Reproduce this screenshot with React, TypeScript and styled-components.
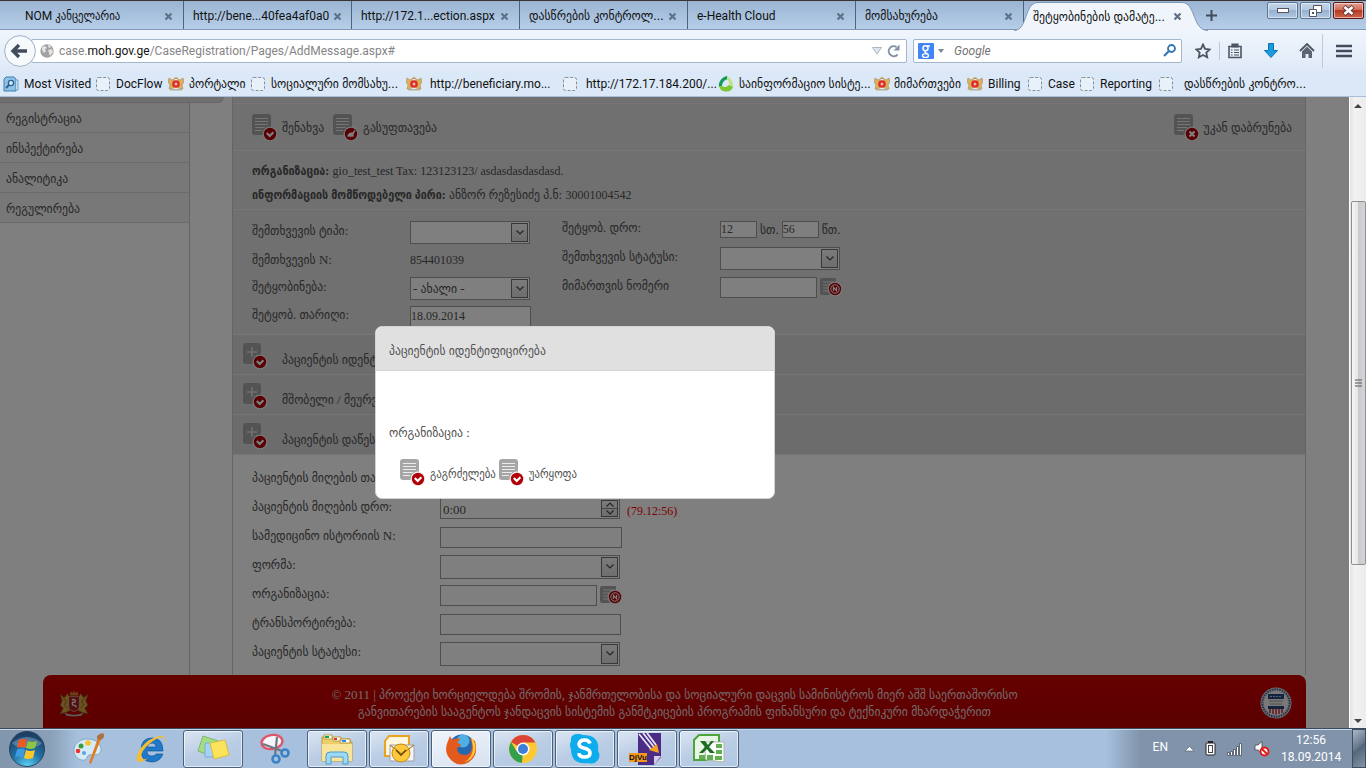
import React from "react";
import styled, { createGlobalStyle } from "styled-components";

const UI = 'Roboto, "DejaVu Sans Condensed", "DejaVu Sans", sans-serif';
const PAGE = '"Liberation Serif", "DejaVu Sans Condensed", "DejaVu Sans", serif';

const Global = createGlobalStyle`
  * { box-sizing: border-box; }
  body { margin: 0; background: #fff; }
  button, input, select { font: inherit; color: inherit; }
  button { border: 0; background: none; padding: 0; cursor: pointer; }
  svg { display: block; flex: none; }
`;

const Screen = styled.div`
  display: flex;
  flex-direction: column;
  height: 100vh;
  overflow: hidden;
  font: 12px/16px ${UI};
  color: #111;
`;

/* ---------- browser chrome ---------- */
const TabStrip = styled.div`
  display: flex;
  flex: none;
  height: 30px;
  padding-left: 16px;
  border-top: 1px solid #3a3336;
  border-bottom: 1px solid #7f9ab8;
  background: linear-gradient(#9ab4d2, #b6cee8);
`;
const Tab = styled.div`
  display: flex;
  align-items: center;
  flex: 0 1 168px;
  min-width: 0;
  padding: 0 10px 0 9px;
  border-right: 1px solid #4f6379;
`;
const ActiveTab = styled(Tab)`
  position: relative;
  flex-basis: 174px;
  height: 29px;
  padding: 0 16px 0 9px;
  border: 0;
`;
const TabShape = styled.svg`
  position: absolute;
  left: -10px;
  top: 0;
`;
const Label = styled.span<{ $ka: boolean }>`
  font-size: ${(p) => (p.$ka ? 13 : 12)}px;
`;
const TabTitle = styled(Label)`
  position: relative;
  flex: 1;
  padding-top: 2px;
  white-space: nowrap;
`;
const CloseButton = styled.button`
  position: relative;
  display: flex;
  padding-top: 2px;
  margin-left: 4px;
`;
const NewTab = styled.button`
  display: flex;
  align-items: center;
  padding-left: 8px;
`;
const WindowControls = styled.div`
  display: flex;
  gap: 2px;
  margin-left: auto;
  padding: 1px 2px 0 0;
`;
const WindowButton = styled.button<{ $close?: boolean }>`
  display: flex;
  align-items: center;
  justify-content: center;
  width: 31px;
  height: 17px;
  border: 1px solid ${(p) => (p.$close ? "#5b1712" : "#5d748f")};
  border-radius: 2px;
  box-shadow: inset 0 0 0 1px rgba(255, 255, 255, 0.5);
  background: ${(p) =>
    p.$close
      ? "linear-gradient(#e3a192, #cf6a55 48%, #b53a22 50%, #d0654c)"
      : "linear-gradient(#c3d4e8, #b3c8e0 48%, #98b1ce 50%, #b0c8e2)"};
`;
const NavBar = styled.div`
  display: flex;
  align-items: center;
  flex: none;
  height: 41px;
  padding: 0 9px 0 4px;
  background: linear-gradient(#f0f5fc, #dfeaf7);
`;
const BackButton = styled.button`
  position: relative;
  display: flex;
  margin-right: -5px;
`;
const Field = styled.div`
  display: flex;
  align-items: center;
  height: 24px;
  background: #fff;
  border: 1px solid #a3b6cc;
  border-radius: 2px;
`;
const UrlField = styled(Field)`
  flex: 1;
  padding: 0 5px 0 8px;
  margin-right: 6px;
  gap: 5px;
`;
const SearchField = styled(Field)`
  width: 269px;
  padding: 0 5px 0 4px;
  gap: 4px;
`;
const Url = styled.span`
  flex: 1;
  color: #858585;
  b { font-weight: 400; color: #111; }
`;
const SearchInput = styled.input`
  flex: 1;
  min-width: 0;
  border: 0;
  padding: 0 0 0 6px;
  outline: 0;
  background: none;
  &::placeholder { font-style: italic; color: #757575; opacity: 1; }
`;
const NavTools = styled.div`
  display: flex;
  align-items: center;
  gap: 8px;
  margin-left: 13px;
`;
const NavTool = styled.button<{ $w: number }>`
  display: flex;
  justify-content: center;
  width: ${(p) => p.$w}px;
`;
const Rule = styled.span<{ $h: number }>`
  width: 1px;
  height: ${(p) => p.$h}px;
  background: #bccadb;
`;
const Bookmarks = styled.nav`
  display: flex;
  align-items: center;
  flex: none;
  height: 26px;
  padding-left: 3px;
  background: #dbe8f7;
  border-bottom: 1px solid #a9bfd6;
`;
const Bookmark = styled.a<{ $w: number; $gap?: number }>`
  display: flex;
  align-items: center;
  flex: 0 1 ${(p) => p.$w}px;
  gap: ${(p) => p.$gap || 5}px;
  min-width: 0;
  color: #111;
  text-decoration: none;
  white-space: nowrap;
`;

/* ---------- web page ---------- */
const Viewport = styled.div`
  display: flex;
  flex: 1;
  min-height: 0;
`;
const Page = styled.div`
  position: relative;
  display: flex;
  flex-direction: column;
  flex: 1;
  min-width: 0;
  overflow: hidden;
  background: #fff;
  font: 13px/16px ${PAGE};
  color: #505050;
`;
const Latin = styled.span`
  font-size: 12px;
`;
const Body = styled.div`
  display: flex;
  flex: 1;
  min-height: 0;
  overflow: hidden;
  padding-right: 43px;
`;
const Side = styled.aside`
  width: 232px;
  flex: none;
  display: flex;
  flex-direction: column;
`;
const SideCap = styled.div`
  height: 6px;
  margin-right: 8px;
  background: #dedede;
  border-bottom: 1px solid #cfcfcf;
  border-bottom-right-radius: 6px;
`;
const Menu = styled.nav`
  flex: 1;
  width: 190px;
  border-right: 1px solid #c9c9c9;
`;
const MenuLink = styled.a`
  display: flex;
  align-items: center;
  height: 30px;
  padding: 2px 0 0 6px;
  background: #f0f0f0;
  border-bottom: 1px solid #d6d6d6;
  color: inherit;
  text-decoration: none;
`;
const Main = styled.main`
  flex: 1;
  min-width: 0;
  border: solid #cacaca;
  border-width: 0 1px;
`;
const Band = styled.section`
  background: #e0e0e0;
  border-bottom: 1px solid #f0f0f0;
`;
const Cap = styled.div`
  height: 7px;
  background: #e0e0e0;
  border-bottom: 1px solid #ececec;
`;
const Toolbar = styled(Band)`
  display: flex;
  align-items: center;
  gap: 9px;
  height: 47px;
  padding: 0 13px 0 19px;
`;
const Action = styled.button`
  display: flex;
  align-items: center;
  gap: 5px;
  span { padding-top: 2px; }
`;
const Spacer = styled.span`
  flex: 1;
`;
const Info = styled(Band)`
  height: 59px;
  padding: 8px 19px;
  line-height: 24px;
  p { margin: 0; }
  b { font-size: 12px; }
`;
const CaseForm = styled(Band)`
  display: flex;
  height: 125px;
  padding: 5px 19px;
`;
const Column = styled.div<{ $w: number; $top?: number }>`
  width: ${(p) => p.$w}px;
  padding-top: ${(p) => p.$top || 0}px;
`;
const Row = styled.div<{ $label: number; $h?: number }>`
  display: grid;
  grid-template-columns: ${(p) => p.$label}px auto;
  align-items: center;
  height: ${(p) => p.$h || 29}px;
  > label { padding-bottom: 3px; }
`;
const Controls = styled.div`
  display: flex;
  align-items: center;
  gap: 3px;
`;
const TextInput = styled.input<{ $w: number; $h?: number }>`
  width: ${(p) => p.$w}px;
  height: ${(p) => p.$h || 21}px;
  padding: 0;
  border: 1px solid #9d9d9d;
  border-radius: 0;
  background: #fff;
  outline: 0;
  font-size: 12px;
`;
const SelectBox = styled.span<{ $w: number; $h?: number }>`
  position: relative;
  display: block;
  width: ${(p) => p.$w}px;
  height: ${(p) => p.$h || 24}px;
  select, input {
    appearance: none;
    width: 100%;
    height: 100%;
    padding: 2px 20px 0 2px;
    border: 1px solid #9d9d9d;
    border-radius: 0;
    background: #fff;
    outline: 0;
  }
`;
const Arrow = styled.span`
  position: absolute;
  top: 2px;
  right: 2px;
  bottom: 2px;
  width: 17px;
  display: flex;
  flex-direction: column;
  align-items: center;
  justify-content: space-evenly;
  border: 1px solid #707070;
  background: linear-gradient(#f6f6f6, #dcdcdc);
  pointer-events: none;
`;
const Divider = styled.span`
  width: 100%;
  height: 1px;
  background: #8c8c8c;
`;
const Late = styled.output`
  margin-left: 4px;
  padding-top: 5px;
  color: #ff0000;
  font-size: 12px;
`;
const Fold = styled.button`
  display: flex;
  align-items: center;
  gap: 14px;
  width: 100%;
  height: 40px;
  padding: 3px 0 0 10px;
  background: #d8d8d8;
  border-bottom: 1px solid #eaeaea;
  span { padding-top: 8px; }
`;
const Details = styled.section`
  padding: 10px 19px;
`;
const Footer = styled.footer`
  display: flex;
  align-items: center;
  justify-content: space-between;
  flex: none;
  height: 53px;
  margin: 0 43px;
  padding: 2px 14px 0 16px;
  border-radius: 8px 8px 0 0;
  background: linear-gradient(#ca0000, #b80000);
  color: #e8d4d4;
  text-align: center;
  p { margin: 0; line-height: 17px; }
`;
const Overlay = styled.div`
  position: absolute;
  inset: 0;
  background: rgba(0, 0, 0, 0.5);
`;
const Modal = styled.div`
  position: absolute;
  left: 375px;
  top: 229px;
  width: 400px;
  border: 1px solid #d2d2d2;
  border-radius: 7px;
  background: #fff;
  overflow: hidden;
`;
const ModalHead = styled.h2`
  margin: 0;
  padding: 16px 13px 11px;
  border-bottom: 1px solid #d4d4d4;
  background: #e0e0e0;
  font: inherit;
`;
const ModalBody = styled.div`
  padding: 54px 13px 12px;
`;
const ModalActions = styled.div`
  display: flex;
  gap: 3px;
  padding: 18px 0 0 11px;
  font-size: 12px;
`;
const ScrollBar = styled.div`
  display: flex;
  flex-direction: column;
  align-items: center;
  width: 17px;
  flex: none;
  padding: 7px 0 5px;
  border-left: 1px solid #fff;
  background: linear-gradient(90deg, #e4e4e4, #f2f2f2 30%, #ececec);
`;
const Thumb = styled.div`
  display: flex;
  align-items: center;
  justify-content: center;
  width: 15px;
  flex: 0 1 364px;
  margin: 93px 0 auto;
  border: 1px solid #8f8f8f;
  border-radius: 2px;
  background: linear-gradient(90deg, #f6f6f6, #e6e6e8 45%, #c9cacd 50%, #d4d5d8);
`;

/* ---------- taskbar ---------- */
const Taskbar = styled.div`
  display: flex;
  flex: none;
  height: 40px;
  border-top: 1px solid #3c4a5c;
  box-shadow: inset 0 1px 0 #c6d8ec;
  background: linear-gradient(90deg, #8195ac, #8a9fb8 50px, #a6c0dd 78px, #a6c0dd calc(100% - 260px), #8093aa calc(100% - 225px));
`;
const StartButton = styled.button`
  display: flex;
  align-items: center;
  width: 58px;
  padding-left: 8px;
`;
const TaskButton = styled.button<{ $open?: boolean; $active?: boolean }>`
  display: flex;
  align-items: center;
  justify-content: center;
  width: 60px;
  margin: 1px 1px 0;
  border: 1px solid ${(p) => (p.$open ? "#4b617b" : "transparent")};
  border-radius: 3px;
  box-shadow: ${(p) => (p.$open ? "inset 0 0 0 1px rgba(255,255,255,.65)" : "none")};
  background: ${(p) =>
    p.$active
      ? "linear-gradient(160deg, #f1f5fb, #d5e1f0)"
      : p.$open
      ? "linear-gradient(160deg, #d5e1f0 10%, #bacde5 50%, #b1c7e1)"
      : "none"};
`;
const Tray = styled.div`
  display: flex;
  align-items: center;
  margin-left: auto;
  color: #fff;
  gap: 11px;
`;
const Language = styled.span`
  margin-right: 6px;
  padding-bottom: 4px;
`;
const Clock = styled.time`
  width: 60px;
  text-align: center;
  line-height: 17px;
`;
const ShowDesktop = styled.button`
  width: 14px;
  height: 39px;
  border: 1px solid #3d4e63;
  background: linear-gradient(140deg, #aab6c4, #66788c 45%, #54667b 50%, #8495a9);
`;

/* ---------- drawings ---------- */
const X = ({ c = "#5f7186" }) => (
  <svg width="9" height="9" viewBox="0 0 9 9"><path d="M1.5 1.5l6 6m0-6l-6 6" stroke={c} strokeWidth="2.2" /></svg>
);
const Dashed = () => (
  <svg width="16" height="16"><rect x="1.5" y="1.5" width="13" height="13" rx="2" fill="#e8f0fa" stroke="#8a8f96" strokeDasharray="3 1.6" /></svg>
);
const Emblem = () => (
  <svg width="16" height="14" viewBox="0 0 16 14">
    <path d="M6 2l1-2 1 1 1-1 1 2z" fill="#c98a35" />
    <path d="M1 1l3 2 2-1v9l-5 1 1-4-2-3zM15 1l-3 2-2-1v9l5 1-1-4 2-3z" fill="#d9b060" stroke="#b08b4e" strokeWidth=".6" />
    <path d="M2 12h12v1.500H2z" fill="#b9b09a" />
    <circle cx="8" cy="7" r="3.800" fill="#e02a1d" />
    <circle cx="8" cy="7" r="1.500" fill="#e3b5b5" />
  </svg>
);
const Arms = () => (
  <svg width="30" height="28" viewBox="0 0 28 26">
    <path d="M10 6l1-4 2 2 1-3 1 3 2-2 1 4z" fill="#c98a35" />
    <path d="M1 5l4 3 3-4 2 5v11l-4 2-5 1 3-5-3-3 2-4zM27 5l-4 3-3-4-2 5v11l4 2 5 1-3-5 3-3-2-4z" fill="#d9a53c" stroke="#7a5a20" strokeWidth=".7" />
    <path d="M4 9l3 2-2 4 3 3M24 9l-3 2 2 4-3 3" stroke="#7a5a20" fill="none" strokeWidth=".8" />
    <path d="M9 7h10v9q0 4-5 5-5-1-5-5z" fill="#a5202a" stroke="#d8c090" strokeWidth=".6" />
    <path d="M12 10q4-1 3 2-4 0-2 3 3 0 3 2" stroke="#f0e6da" fill="none" strokeWidth="1.300" />
    <path d="M5 22q9 4 18 0l-2 3q-7 1-14 0z" fill="#b6b6a6" />
  </svg>
);
const Visited = () => (
  <svg width="16" height="16"><path d="M3 1h8l2 2v12H1V3z" fill="#8fc3e6" stroke="#3d7fb0" /><path d="M13 4h2v10h-2" fill="#c3def2" stroke="#6fa3c9" /><circle cx="8" cy="7" r="2.6" fill="#d8edf9" stroke="#2a638f" strokeWidth="1.4" /><path d="M6 9l-3 3" stroke="#2a638f" strokeWidth="1.8" /></svg>
);
const Swirl = () => (
  <svg width="16" height="16"><path d="M9 0C4 1 0 6 1 11l3-1c0-3 2-6 6-7z" fill="#149a5b" /><path d="M9 0c4 2 7 7 6 11l-4-1c0-3 0-5-2-7z" fill="#c4e08a" /><path d="M1 10c1 4 4 6 8 5.500 3 0 5-2 6-4.500l-4-2c-2 2-5 3-7 1z" fill="#7cc62f" /></svg>
);
const Badge = ({ kind, x = 18, y = 20 }: { kind: string; x?: number; y?: number }) => (
  <g transform={`translate(${x} ${y})`}>
    <circle r="7.500" fill="#f4f4f4" />
    <circle r="6.200" fill="#b20008" />
    {kind === "ok" && <path d="M-3.200-1l2.900 3L3.400-1.800" stroke="#fff" strokeWidth="2.200" fill="none" />}
    {kind === "x" && <path d="M-2.500-2.500l5 5m0-5l-5 5" stroke="#fff" strokeWidth="2.200" />}
    {kind === "clear" && <path d="M3.500-4l-2 2.500C-1.500-2-3.500 0-4 3l1.500-1v1.500L-1 2.200v1.300l1.300-1.300.8 1.300.7-1.500 1 1L2.600 0l2-3.200z" fill="#fff" />}
    {kind === "sync" && <><circle r="4.200" fill="none" stroke="#fff" strokeWidth="1" /><path d="M-1.500 2v-3.600l3 3.200V-2" fill="none" stroke="#fff" strokeWidth="1.300" /></>}
  </g>
);
const Doc = ({ kind }: { kind: string }) => (
  <svg width="25" height="27" viewBox="0 0 25 27">
    <path d="M3 0h13a3 3 0 013 3v18H3a3 3 0 01-3-3V3a3 3 0 013-3z" fill="#a6a6a6" />
    <path d="M3 4.500h13M3 7.500h13M3 10.500h13M3 13.500h10M3 16.500h7" stroke="#ececec" strokeWidth="1.200" />
    <Badge kind={kind} />
  </svg>
);
const SmallDoc = () => (
  <svg width="22" height="19" viewBox="0 0 22 19">
    <path d="M2 0h14v17H2a2 2 0 01-2-2V2a2 2 0 012-2z" fill="#a6a6a6" />
    <path d="M3 4h10M3 7h7M3 10h6M3 13h6" stroke="#ececec" />
    <Badge kind="sync" x={15} y={11} />
  </svg>
);
const Plus = () => (
  <svg width="25" height="27" viewBox="0 0 25 27">
    <rect width="18" height="21" rx="3" fill="#a6a6a6" />
    <path d="M9 4v10M4 9h10" stroke="#e0e0e0" strokeWidth="1.600" />
    <Badge kind="ok" x={17} y={19} />
  </svg>
);
const Chevron = ({ up = false }) => (
  <svg width="8" height="5"><path d={up ? "M.500 4.500l3.500-3.500 3.500 3.500" : "M.500.500l3.500 3.500 3.500-3.500"} fill="none" stroke="#4a4a4a" strokeWidth="1.200" /></svg>
);
const Seal = () => (
  <svg width="32" height="32" viewBox="0 0 32 32">
    <circle cx="16" cy="16" r="15.500" fill="#d8dde6" />
    <circle cx="16" cy="16" r="13.700" fill="none" stroke="#4a648f" strokeWidth="2" strokeDasharray="1.500 1" />
    <circle cx="16" cy="16" r="12" fill="#f3f3f3" />
    <path d="M8 7h16v5H8z" fill="#27497f" /><path d="M10 9.500h12" stroke="#b9c6dc" strokeDasharray="2 1" />
    <path d="M9 14h14M10 17h12" stroke="#999" />
    <path d="M8 19h16v3H8z" fill="#27497f" /><path d="M9 22h14l-2 5H11z" fill="#fff" />
    <path d="M10 22v4M13 22v5M16 22v5.500M19 22v5M22 22v4" stroke="#cc2a35" strokeWidth="1.500" />
  </svg>
);
const Back = () => (
  <svg width="32" height="32"><circle cx="16" cy="16" r="15.400" fill="#f7fafd" stroke="#9db0c6" /><path d="M15 10l-6 6 6 6M10 16h13" fill="none" stroke="#414d5c" strokeWidth="3.400" /></svg>
);
const Globe = () => (
  <svg width="14" height="14"><circle cx="7" cy="7" r="6.700" fill="#a2a2a2" /><path d="M2 3l3-1 2 2-2 1 1 2-2 2-2-3zM8 6l4-1 1 3-3 4-1-3zM8 1l3 1-1 2-2-1z" fill="#e3e3e3" /></svg>
);

const Orb = () => (
  <svg width="38" height="38" viewBox="0 0 38 38">
    <defs>
      <radialGradient id="orb" cx=".5" cy="1" r=".9"><stop offset="0" stopColor="#5fd3f5" /><stop offset=".5" stopColor="#2173a8" /><stop offset="1" stopColor="#1c4066" /></radialGradient>
    </defs>
    <circle cx="19" cy="19" r="17.500" fill="url(#orb)" stroke="#27455f" />
    <path d="M4 13Q19 1 34 13q-4 5-15 5T4 13z" fill="#fff" opacity=".25" />
    <path d="M11 10q4-2 8 0l-2 8q-4-2-8 0z" fill="#ee5b22" /><path d="M20 11q4 2 9 0l-2 7q-4 2-9 0z" fill="#8dc63f" />
    <path d="M9 19.500q4-2 8 0l-2 8q-4-2-8 0z" fill="#3f9be0" /><path d="M18 20q4 2 9 0l-2 8q-5 2-9 0z" fill="#fcc62d" />
  </svg>
);
const Paint = () => (
  <svg width="32" height="32" viewBox="0 0 32 32">
    <path d="M14 6C6 6 0 12 1 19c1 6 7 9 11 8 3-1 1-4 4-5 4-1 10 2 12-4C29 11 23 6 14 6z" fill="#d5ebf8" stroke="#86a9c2" />
    <circle cx="5" cy="18" r="2.300" fill="#e33" /><circle cx="8" cy="13" r="2.500" fill="#3a9d3a" /><circle cx="15" cy="10" r="2.800" fill="#f7c52b" /><circle cx="11" cy="20" r="2" fill="#5ba5e0" />
    <path d="M28 6L18 31l-2-1L25 5z" fill="#e27b1e" /><path d="M24 6q-1-5 6-6 3 4-2 7z" fill="#a87443" />
  </svg>
);
const IE = () => (
  <svg width="32" height="32" viewBox="0 0 32 32">
    <path d="M28 18H12q0 5 5 5 3 0 4-2h7q-3 8-11 8-11 0-11-12T17 5q11 0 11 13zM12 14h9q0-4-4-4t-5 4z" fill="#1f78c8" stroke="#124f8e" strokeWidth=".6" />
    <path d="M30 8q1-7-9-4Q9 8 3 20q-3 8 1 9 4 0 9-4-6 3-7-1 0-6 8-13Q25 2 29 5q1 1 0 4z" fill="#f6bd2c" />
  </svg>
);
const Notes = () => (
  <svg width="34" height="30" viewBox="0 0 34 30"><path d="M7 2l15 5-6 15-14-5z" fill="#a5dd86" stroke="#7eb865" /><path d="M9 9h14v14H9z" fill="#a6d3f5" stroke="#79afd8" /><path d="M14 9l15-3 4 15-15 4z" fill="#fbe45b" stroke="#d9bb3e" /></svg>
);
const Snip = () => (
  <svg width="32" height="32" viewBox="0 0 32 32"><ellipse cx="13" cy="9" rx="10.500" ry="7" transform="rotate(-10 13 9)" fill="#f6f6f8" stroke="#e0566a" strokeWidth="2.400" /><path d="M4 11l19 7M18 4l-2 19" stroke="#6d7782" strokeWidth="2.200" /><circle cx="17" cy="26" r="3.500" fill="none" stroke="#3b82c4" strokeWidth="2.600" /><circle cx="26" cy="20" r="3.500" fill="none" stroke="#3b82c4" strokeWidth="2.600" /></svg>
);
const Explorer = () => (
  <svg width="34" height="32" viewBox="0 0 34 32"><path d="M2 4h10l2 2h16v3h2v19H2z" fill="#eccf6b" stroke="#b99a3e" /><path d="M4 2h8v4H4zM13 4h8v4h-8zM20 6h10v4H20z" fill="#fff" stroke="#b99a3e" /><path d="M5 3h4v2H5z" fill="#1ca640" /><path d="M14 5h3v2h-3z" fill="#d33" /><path d="M22 7h4v2h-4z" fill="#2b8be0" /><path d="M2 11h30v17H2z" fill="#f8e59a" /><path d="M6 31v-8q0-4 4-4h14q4 0 4 4v8h-5v-7H11v7z" fill="#9fd8f3" stroke="#4b9ccc" /></svg>
);
const Outlook = () => (
  <svg width="32" height="30" viewBox="0 0 32 30"><path d="M6 2h20v20H2V7z" fill="#fff6df" stroke="#eaa21f" strokeWidth="2" /><path d="M7 11h24v16H7z" fill="#f5f5f7" stroke="#a0a0a8" /><path d="M7 11l12 9 12-9" fill="none" stroke="#a0a0a8" /><circle cx="18" cy="19" r="9" fill="#fdc93b" stroke="#c88a10" /><path d="M7 11l12 9 12-9" fill="none" stroke="#b07d12" /><path d="M13 16l5 5 5-5" stroke="#6d4a09" fill="none" strokeWidth="1.600" /></svg>
);
const Firefox = () => (
  <svg width="32" height="32" viewBox="0 0 32 32"><circle cx="17" cy="15" r="13.500" fill="#2668b0" /><circle cx="18" cy="8" r="6.500" fill="#4fb0e4" /><path d="M30 8q4 15-6 21T6 27Q-2 19 3 8l2-5 2 4q4-3 8-1l-3 4q3 0 4 2-1 2-4 3 0 6 7 7 8 0 8-9 0-4-2-8z" fill="#e4591c" /><path d="M26 4q6 6 4 15-3 9-11 10 9-4 9-15z" fill="#fbca3a" /></svg>
);
const Chrome = () => (
  <svg width="30" height="30" viewBox="0 0 30 30"><circle cx="15" cy="15" r="14" fill="#fcc934" /><path d="M15 15L3 8A14 14 0 0127.500 8.500H15z" fill="#dc4437" /><path d="M15 15l-1 14A14 14 0 013 8l6 10z" fill="#34a04c" /><circle cx="15" cy="15" r="6.500" fill="#fff" /><circle cx="15" cy="15" r="5" fill="#3d7fd9" /></svg>
);
const Skype = () => (
  <svg width="32" height="32" viewBox="0 0 32 32"><path d="M2 8Q1 1 9 1q3 0 5 1 17 0 15 16 3 4 0 9-4 5-10 3Q2 32 2 16q-2-4 0-8z" fill="#0caced" /><path d="M21 10.500q-1-3.500-5.500-3.500T10 11q0 3 5.500 4.300T21 20q0 4-5.500 4T10 20" fill="none" stroke="#fff" strokeWidth="3.600" /></svg>
);
const DjvuBox = styled.span`
  position: relative;
  display: block;
`;
const DjvuTag = styled.span`
  position: absolute;
  left: -2px;
  bottom: 3px;
  background: #f5971e;
  color: #111;
  font: bold 8px/9px "Liberation Sans", sans-serif;
`;
const Djvu = () => (
  <DjvuBox>
    <svg width="32" height="32" viewBox="0 0 32 32"><path d="M7 0h23v24l-7 8H7z" fill="#4a2c87" /><path d="M30 23h-7v9z" fill="#d6cbe9" /><path d="M8 1l12 15M12 0l11 14M16 0l9 12" stroke="#e6e4ee" strokeWidth="1.800" /><path d="M18 17l8-6 2 9z" fill="#f5a021" /></svg>
    <DjvuTag>DjVu</DjvuTag>
  </DjvuBox>
);
const Excel = () => (
  <svg width="34" height="32" viewBox="0 0 34 32"><path d="M7 2h20v25H2V7z" fill="#e9f5e4" stroke="#4ba43c" strokeWidth="2" /><path d="M12 9h20v20l-18-2z" fill="#fbfdfb" stroke="#a9bba6" /><path d="M24 11h6v4h-6zM24 17h6v4h-6zM7 22h6v4H7zM15 22h6v5h-6zM23 23h7v4h-7z" fill="#63ad52" /><path d="M8 8h5l3 4 3-4h3l-5 6 6 6h-5l-3-4-4 4H7l6-6z" fill="#1d6b20" /></svg>
);

const isKa = (t: string) => /^[ა-ჰ]/.test(t);

const tabs = ["NOM კანცელარია", "http://bene...40fea4af0a0", "http://172.1...ection.aspx", "დასწრების კონტროლ...", "e-Health Cloud", "მომსახურება"];
const bookmarks: [string, number, React.ReactNode, number?][] = [
  ["Most Visited", 92, <Visited />],
  ["DocFlow", 73, <Dashed />],
  ["პორტალი", 82, <Emblem />],
  ["სოციალური მომსახუ...", 156, <Dashed />],
  ["http://beneficiary.mo...", 156, <Emblem />, 8],
  ["http://172.17.184.200/...", 156, <Dashed />, 8],
  ["საინფორმაციო სისტე...", 156, <Swirl />],
  ["მიმართვები", 93, <Emblem />, 4],
  ["Billing", 60, <Emblem />],
  ["Case", 52, <Dashed />],
  ["Reporting", 79, <Dashed />],
  ["დასწრების კონტრო...", 170, <Dashed />, 10],
];
const tasks: [string, React.ReactNode, boolean, boolean?][] = [
  ["Paint", <Paint />, false],
  ["Internet Explorer", <IE />, false],
  ["Sticky Notes", <Notes />, true],
  ["Snipping Tool", <Snip />, false],
  ["Explorer", <Explorer />, true],
  ["Outlook", <Outlook />, true],
  ["Firefox", <Firefox />, true, true],
  ["Chrome", <Chrome />, true],
  ["Skype", <Skype />, true],
  ["DjVu", <Djvu />, true],
  ["Excel", <Excel />, true],
];

const Select = ({ id, w, h, value }: { id: string; w: number; h?: number; value?: string }) => (
  <SelectBox $w={w} $h={h}>
    <select id={id}><option>{value || ""}</option></select>
    <Arrow><Chevron /></Arrow>
  </SelectBox>
);

export default function App() {
  return (
    <Screen>
      <Global />
      <TabStrip>
        {tabs.map((t) => (
          <Tab key={t}><TabTitle $ka={isKa(t)}>{t}</TabTitle><CloseButton aria-label="Close tab"><X /></CloseButton></Tab>
        ))}
        <ActiveTab>
          <TabShape width="194" height="30"><path d="M0 29.500C14 29.500 10 1.500 24 1.500H168C182 1.500 178 29.500 194 29.500" fill="#f0f5fc" stroke="#7f9ab8" /></TabShape>
          <TabTitle $ka>შეტყობინების დამატე...</TabTitle>
          <CloseButton aria-label="Close tab"><X /></CloseButton>
        </ActiveTab>
        <NewTab aria-label="New tab"><svg width="11" height="11"><path d="M5.500 0v11M0 5.500h11" stroke="#414d5c" strokeWidth="2" /></svg></NewTab>
        <WindowControls>
          <WindowButton aria-label="Minimize"><svg width="12" height="5"><rect x=".5" y=".5" width="11" height="4" fill="#fff" stroke="#556" /></svg></WindowButton>
          <WindowButton aria-label="Restore"><svg width="13" height="12"><path d="M4.500.5h8v7h-8z" fill="#fff" stroke="#556" /><path d="M.5 4.500h7v7h-7z" fill="#fff" stroke="#556" /><path d="M3 7h2v2H3z" fill="#556" /></svg></WindowButton>
          <WindowButton $close aria-label="Close"><svg width="13" height="11"><path d="M2 1.500l9 8m0-8l-9 8" stroke="#5b3a3a" strokeWidth="4.400" /><path d="M2.500 2l8 7m0-7l-8 7" stroke="#fff" strokeWidth="2.600" /></svg></WindowButton>
        </WindowControls>
      </TabStrip>

      <NavBar>
        <BackButton aria-label="Back"><Back /></BackButton>
        <UrlField>
          <Globe />
          <Url>case.<b>moh.gov.ge</b>/CaseRegistration/Pages/AddMessage.aspx#</Url>
          <svg width="10" height="8"><path d="M.5.5h9L5 7z" fill="#dfe5ec" stroke="#a9b6c4" /></svg>
          <svg width="14" height="14"><path d="M10.500 10.500A5 5 0 119.500 3" fill="none" stroke="#8494a6" strokeWidth="2" /><path d="M12.500.5v6h-6z" fill="#8494a6" /></svg>
        </UrlField>
        <SearchField>
          <svg width="16" height="16" viewBox="0 0 16 16"><rect width="16" height="16" rx="1" fill="#4285f4" /><circle cx="7.500" cy="5.200" r="2.500" fill="none" stroke="#fff" strokeWidth="1.500" /><path d="M9 3h3M7.500 8q-1.500 1 .5 2c2 1 2.500 1.500 2.500 2.500 0 2.500-6 2.500-6 0 0-2 3.500-2 4.500-2" fill="none" stroke="#fff" strokeWidth="1.400" /></svg>
          <svg width="6" height="4"><path d="M0 0h6L3 4z" fill="#7b8794" /></svg>
          <SearchInput aria-label="Search" placeholder="Google" />
          <svg width="13" height="13"><circle cx="8.500" cy="4.500" r="3.500" fill="none" stroke="#2f76b5" strokeWidth="1.800" /><path d="M6 7l-5 5" stroke="#2f76b5" strokeWidth="2.200" /></svg>
        </SearchField>
        <NavTools>
          <NavTool $w={16} aria-label="Bookmark this page"><svg width="16" height="16"><path d="M8 1.500l2 4.300 4.700.6-3.400 3.200.9 4.700L8 12l-4.200 2.300.9-4.700L1.300 6.400 6 5.800z" fill="none" stroke="#4c5663" strokeWidth="1.800" /></svg></NavTool>
          <Rule $h={18} />
          <NavTool $w={14} aria-label="Bookmarks"><svg width="14" height="16"><path d="M1 3.500h12v11H1z" fill="none" stroke="#4c5663" strokeWidth="1.600" /><path d="M4 1h6v3H4zM3 7h1.500M6 7h5M3 9.500h1.500M6 9.500h5M3 12h1.500M6 12h5" stroke="#4c5663" strokeWidth="1.200" fill="#4c5663" /></svg></NavTool>
          <NavTool $w={42} aria-label="Downloads"><svg width="14" height="15"><path d="M4.500.5h5v7h4L7 14.500.5 7.500h4z" fill="#1a9be0" stroke="#0c74b4" /></svg></NavTool>
          <NavTool $w={14} aria-label="Home"><svg width="16" height="15"><path d="M1 8l7-7 7 7" fill="none" stroke="#4c5663" strokeWidth="1.800" /><path d="M3 8.500l5-5 5 5V15H9.500v-4h-3v4H3z" fill="#5c6672" /></svg></NavTool>
          <Rule $h={34} />
          <NavTool $w={26} aria-label="Menu"><svg width="16" height="14"><path d="M0 2h16M0 7h16M0 12h16" stroke="#414d5c" strokeWidth="2.600" /></svg></NavTool>
        </NavTools>
      </NavBar>

      <Bookmarks>
        {bookmarks.map(([t, w, icon, gap]) => (
          <Bookmark key={t} href="#" $w={w} $gap={gap}>{icon}<Label $ka={isKa(t)}>{t}</Label></Bookmark>
        ))}
      </Bookmarks>

      <Viewport>
        <Page>
          <Body>
            <Side>
              <SideCap />
              <Menu>
                {["რეგისტრაცია", "ინსპექტირება", "ანალიტიკა", "რეგულირება"].map((t) => (
                  <MenuLink key={t} href="#">{t}</MenuLink>
                ))}
              </Menu>
            </Side>
            <Main>
              <Cap />
              <Toolbar>
                <Action><Doc kind="ok" /><span>შენახვა</span></Action>
                <Action><Doc kind="clear" /><span>გასუფთავება</span></Action>
                <Spacer />
                <Action><Doc kind="x" /><span>უკან დაბრუნება</span></Action>
              </Toolbar>
              <Info>
                <p><b>ორგანიზაცია:</b> <Latin>gio_test_test Tax: 123123123/ asdasdasdasdasd.</Latin></p>
                <p><b>ინფორმაციის მომწოდებელი პირი:</b> ანზორ რეზესიძე პ.ნ: <Latin>30001004542</Latin></p>
              </Info>
              <CaseForm>
                <Column $w={310} $top={3}>
                  <Row $label={158} $h={28}><label htmlFor="type">შემთხვევის ტიპი:</label><Select id="type" w={120} h={23} /></Row>
                  <Row $label={158} $h={28}><span>შემთხვევის N:</span><Latin>854401039</Latin></Row>
                  <Row $label={158} $h={28}><label htmlFor="msg">შეტყობინება:</label><Select id="msg" w={120} h={23} value="- ახალი -" /></Row>
                  <Row $label={158} $h={28}><label htmlFor="date">შეტყობ. თარიღი:</label><TextInput id="date" $w={121} defaultValue="18.09.2014" /></Row>
                </Column>
                <Column $w={310}>
                  <Row $label={158}>
                    <label htmlFor="hour">შეტყობ. დრო:</label>
                    <Controls>
                      <TextInput id="hour" $w={37} $h={17} defaultValue="12" /><label htmlFor="hour">სთ.</label>
                      <TextInput id="minute" $w={37} $h={17} defaultValue="56" /><label htmlFor="minute">წთ.</label>
                    </Controls>
                  </Row>
                  <Row $label={158}><label htmlFor="state">შემთხვევის სტატუსი:</label><Select id="state" w={120} h={23} /></Row>
                  <Row $label={158}>
                    <label htmlFor="ref">მიმართვის ნომერი</label>
                    <Controls><TextInput id="ref" $w={97} /><button aria-label="Find referral"><SmallDoc /></button></Controls>
                  </Row>
                </Column>
              </CaseForm>
              <Fold><Plus /><span>პაციენტის იდენტიფიცირება</span></Fold>
              <Fold><Plus /><span>მშობელი / მეურვე</span></Fold>
              <Fold><Plus /><span>პაციენტის დაწესე</span></Fold>
              <Details>
                <Row $label={188}><label htmlFor="inDate">პაციენტის მიღების თარიღი:</label><TextInput id="inDate" $w={181} /></Row>
                <Row $label={188}>
                  <label htmlFor="inTime">პაციენტის მიღების დრო:</label>
                  <Controls>
                    <SelectBox $w={180} $h={21}>
                      <input id="inTime" defaultValue="0:00" />
                      <Arrow><Chevron up /><Divider /><Chevron /></Arrow>
                    </SelectBox>
                    <Late>(79.12:56)</Late>
                  </Controls>
                </Row>
                <Row $label={188}><label htmlFor="hist">სამედიცინო ისტორიის N:</label><TextInput id="hist" $w={182} /></Row>
                <Row $label={188}><label htmlFor="form">ფორმა:</label><Select id="form" w={180} /></Row>
                <Row $label={188}>
                  <label htmlFor="org">ორგანიზაცია:</label>
                  <Controls><TextInput id="org" $w={157} /><button aria-label="Find organisation"><SmallDoc /></button></Controls>
                </Row>
                <Row $label={188}><label htmlFor="trans">ტრანსპორტირება:</label><TextInput id="trans" $w={181} /></Row>
                <Row $label={188}><label htmlFor="pstate">პაციენტის სტატუსი:</label><Select id="pstate" w={180} /></Row>
              </Details>
            </Main>
          </Body>
          <Footer>
            <Arms />
            <p>
              © 2011 | პროექტი ხორციელდება შრომის, ჯანმრთელობისა და სოციალური დაცვის სამინისტროს მიერ აშშ საერთაშორისო
              <br />
              განვითარების სააგენტოს ჯანდაცვის სისტემის განმტკიცების პროგრამის ფინანსური და ტექნიკური მხარდაჭერით
            </p>
            <Seal />
          </Footer>
          <Overlay />
          <Modal role="dialog" aria-labelledby="modal-title">
            <ModalHead id="modal-title">პაციენტის იდენტიფიცირება</ModalHead>
            <ModalBody>
              ორგანიზაცია :
              <ModalActions>
                <Action><Doc kind="ok" /><span>გაგრძელება</span></Action>
                <Action><Doc kind="ok" /><span>უარყოფა</span></Action>
              </ModalActions>
            </ModalBody>
          </Modal>
        </Page>
        <ScrollBar>
          <svg width="8" height="4"><path d="M0 4l4-4 4 4z" fill="#444" /></svg>
          <Thumb><svg width="7" height="8"><path d="M0 1h7M0 4h7M0 7h7" stroke="#555" strokeWidth="1.200" /></svg></Thumb>
          <svg width="8" height="4"><path d="M0 0l4 4 4-4z" fill="#444" /></svg>
        </ScrollBar>
      </Viewport>

      <Taskbar>
        <StartButton aria-label="Start"><Orb /></StartButton>
        {tasks.map(([name, icon, open, active]) => (
          <TaskButton key={name} aria-label={name} $open={open} $active={active}>{icon}</TaskButton>
        ))}
        <Tray>
          <Language>EN</Language>
          <svg width="9" height="6"><path d="M0 5l4.500-4.500L9 5z" fill="#fff" stroke="#4a596c" strokeWidth=".6" /></svg>
          <svg width="11" height="15"><rect x="1" y="2" width="9" height="12" rx="1" fill="#fff" stroke="#222" /><rect x="3.500" y="4.500" width="4" height="7" fill="none" stroke="#444" /><path d="M3 1h5" stroke="#222" strokeWidth="2" /></svg>
          <svg width="16" height="14"><path d="M.5 10.500h2v3h-2zM3.500 9.500h2v4h-2zM6.500 7.500h2v6h-2zM9.500 4.500h2v9h-2zM12.500 1.500h2v12h-2z" fill="#fff" stroke="#46515f" strokeWidth=".8" /></svg>
          <svg width="16" height="16"><path d="M1 4h3l4-3.500v12L4 9H1z" fill="#fff" stroke="#444" strokeWidth=".8" /><circle cx="10.500" cy="10.500" r="4" fill="#fff" stroke="#e01b1b" strokeWidth="2" /><path d="M8 8l5 5" stroke="#e01b1b" strokeWidth="2" /></svg>
          <Clock>12:56<br />18.09.2014</Clock>
          <ShowDesktop aria-label="Show desktop" />
        </Tray>
      </Taskbar>
    </Screen>
  );
}
